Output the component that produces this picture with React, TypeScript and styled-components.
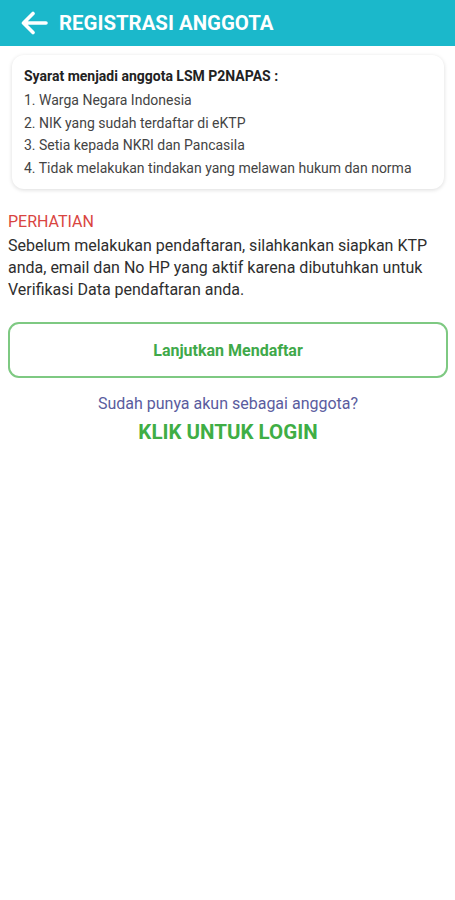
import React from 'react';
import styled, { createGlobalStyle } from 'styled-components';

const GlobalStyle = createGlobalStyle`
  body {
    margin: 0;
    background: #ffffff;
    font-family: Roboto, 'Noto Sans', sans-serif;
    color: #333;
  }
`;

const Page = styled.div`
  width: 455px;
  min-height: 900px;
  background: #fff;
`;

const Header = styled.header`
  height: 46px;
  background: #1bb8cb;
  display: flex;
  align-items: center;
  padding-left: 20px;
  gap: 11px;
`;

const Title = styled.h1`
  margin: 0;
  color: #fff;
  font-size: 20.4px;
  font-weight: 700;
`;

const Card = styled.section`
  margin: 9px 11px 0 12px;
  padding: 12px 12px 10px;
  border-radius: 12px;
  background: #fff;
  box-shadow: 0 1px 4px rgba(0, 0, 0, 0.14);
`;

const CardTitle = styled.p`
  margin: 0 0 3px;
  font-size: 14px;
  font-weight: 700;
  color: #222;
  line-height: 19px;
`;

const ReqList = styled.ol`
  margin: 0;
  padding: 0;
  list-style: none;

  li {
    font-size: 14px;
    line-height: 22.5px;
    color: #444;
  }
`;

const Notice = styled.div`
  padding: 22px 8px 0;
`;

const NoticeTitle = styled.p`
  margin: 0 0 3px;
  font-size: 16px;
  color: #d9453f;
  line-height: 21px;
`;

const NoticeText = styled.p`
  margin: 0;
  font-size: 16px;
  line-height: 22px;
  color: #2e2e2e;
`;

const Actions = styled.div`
  padding: 21px 7px 0 8px;
  display: flex;
  flex-direction: column;
  align-items: center;
`;

const OutlineButton = styled.button`
  width: 100%;
  height: 56px;
  border: 2px solid #7ec982;
  border-radius: 11px;
  background: #fff;
  color: #3fa94a;
  font-family: Roboto, 'Noto Sans', sans-serif;
  font-size: 16px;
  font-weight: 700;
  cursor: pointer;
`;

const Question = styled.p`
  margin: 15px 0 0;
  font-size: 16px;
  color: #5a5c9e;
  line-height: 21px;
`;

const LoginLink = styled.a`
  margin-top: 5px;
  font-size: 20.5px;
  font-weight: 700;
  color: #3fae45;
  line-height: 26px;
  text-decoration: none;
  cursor: pointer;
`;

const BackArrow = () => (
  <svg width="28" height="24" viewBox="0 0 28 24" fill="none">
    <path
      d="M26 12H4M13 2.5L3.5 12L13 21.5"
      stroke="#fff"
      strokeWidth="3.6"
      strokeLinecap="round"
      strokeLinejoin="round"
    />
  </svg>
);

const requirements = [
  '1. Warga Negara Indonesia',
  '2. NIK yang sudah terdaftar di eKTP',
  '3. Setia kepada NKRI dan Pancasila',
  '4. Tidak melakukan tindakan yang melawan hukum dan norma',
];

const App: React.FC = () => {
  return (
    <>
      <GlobalStyle />
      <Page>
        <Header>
          <BackArrow />
          <Title>REGISTRASI ANGGOTA</Title>
        </Header>
        <Card>
          <CardTitle>Syarat menjadi anggota LSM P2NAPAS :</CardTitle>
          <ReqList>
            {requirements.map((r) => (
              <li key={r}>{r}</li>
            ))}
          </ReqList>
        </Card>
        <Notice>
          <NoticeTitle>PERHATIAN</NoticeTitle>
          <NoticeText>
            Sebelum melakukan pendaftaran, silahkankan siapkan KTP anda, email dan No HP yang aktif
            karena dibutuhkan untuk Verifikasi Data pendaftaran anda.
          </NoticeText>
        </Notice>
        <Actions>
          <OutlineButton>Lanjutkan Mendaftar</OutlineButton>
          <Question>Sudah punya akun sebagai anggota?</Question>
          <LoginLink>KLIK UNTUK LOGIN</LoginLink>
        </Actions>
      </Page>
    </>
  );
};

export default App;
